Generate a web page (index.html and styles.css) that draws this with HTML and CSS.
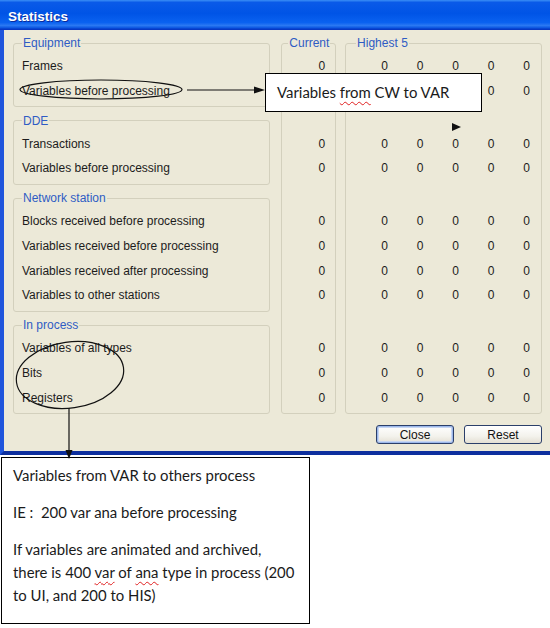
FILE: index.html
```html
<!DOCTYPE html>
<html lang="en">
<head>
    <meta charset="UTF-8">
    <title>Statistics</title>
    <link rel="stylesheet" href="styles.css">
</head>
<body>
<div class="page">

    <div class="window">
        <div class="title-bar">
            <span class="title">Statistics</span>
        </div>

        <div class="window-body">
            <div class="stats">

                <div class="groups">
                    <fieldset class="group">
                        <legend>Equipment</legend>
                        <div class="row">Frames</div>
                        <div class="row">Variables before processing</div>
                    </fieldset>
                    <fieldset class="group">
                        <legend>DDE</legend>
                        <div class="row">Transactions</div>
                        <div class="row">Variables before processing</div>
                    </fieldset>
                    <fieldset class="group">
                        <legend>Network station</legend>
                        <div class="row">Blocks received before processing</div>
                        <div class="row">Variables received before processing</div>
                        <div class="row">Variables received after processing</div>
                        <div class="row">Variables to other stations</div>
                    </fieldset>
                    <fieldset class="group">
                        <legend>In process</legend>
                        <div class="row">Variables of all types</div>
                        <div class="row">Bits</div>
                        <div class="row">Registers</div>
                    </fieldset>
                </div>

                <fieldset class="column current">
                    <legend>Current</legend>
                    <div class="block">
                        <div class="row">0</div>
                        <div class="row">0</div>
                    </div>
                    <div class="block">
                        <div class="row">0</div>
                        <div class="row">0</div>
                    </div>
                    <div class="block">
                        <div class="row">0</div>
                        <div class="row">0</div>
                        <div class="row">0</div>
                        <div class="row">0</div>
                    </div>
                    <div class="block">
                        <div class="row">0</div>
                        <div class="row">0</div>
                        <div class="row">0</div>
                    </div>
                </fieldset>

                <fieldset class="column highest">
                    <legend>Highest 5</legend>
                    <div class="block">
                        <div class="row"><span>0</span><span>0</span><span>0</span><span>0</span><span>0</span></div>
                        <div class="row"><span>0</span><span>0</span><span>0</span><span>0</span><span>0</span></div>
                    </div>
                    <div class="block">
                        <div class="row"><span>0</span><span>0</span><span>0</span><span>0</span><span>0</span></div>
                        <div class="row"><span>0</span><span>0</span><span>0</span><span>0</span><span>0</span></div>
                    </div>
                    <div class="block">
                        <div class="row"><span>0</span><span>0</span><span>0</span><span>0</span><span>0</span></div>
                        <div class="row"><span>0</span><span>0</span><span>0</span><span>0</span><span>0</span></div>
                        <div class="row"><span>0</span><span>0</span><span>0</span><span>0</span><span>0</span></div>
                        <div class="row"><span>0</span><span>0</span><span>0</span><span>0</span><span>0</span></div>
                    </div>
                    <div class="block">
                        <div class="row"><span>0</span><span>0</span><span>0</span><span>0</span><span>0</span></div>
                        <div class="row"><span>0</span><span>0</span><span>0</span><span>0</span><span>0</span></div>
                        <div class="row"><span>0</span><span>0</span><span>0</span><span>0</span><span>0</span></div>
                    </div>
                </fieldset>

            </div>

            <div class="buttons">
                <button class="btn btn-default">Close</button>
                <button class="btn">Reset</button>
            </div>
        </div>
    </div>

    <!-- note under the dialog -->
    <div class="note note-bottom">
        <p>Variables from VAR to others process</p>
        <p>IE :&nbsp; 200 var ana before processing</p>
        <p>If variables are animated and archived,<br>
           there is 400 <span class="typo">var</span> of <span class="typo">ana</span> type in process (200<br>
           to UI, and 200 to HIS)</p>
    </div>

    <!-- annotations drawn over the dialog -->
    <div class="note note-top">Variables <span class="typo">from</span> CW to VAR</div>

    <svg class="marks" width="550" height="628" viewBox="0 0 550 628">
        <ellipse cx="101" cy="89.5" rx="81" ry="9.5" fill="none" stroke="#111" stroke-width="1.2"/>
        <line x1="187" y1="90" x2="256" y2="90" stroke="#111" stroke-width="1.2"/>
        <polygon points="254,86.5 265,90 254,93.5" fill="#111"/>
        <polygon points="452,123 461,127 452,131" fill="#111"/>
        <ellipse cx="70" cy="375" rx="54" ry="33" transform="rotate(-8 70 375)" fill="none" stroke="#111" stroke-width="1.2"/>
        <line x1="69" y1="408" x2="69" y2="451" stroke="#111" stroke-width="1.2"/>
        <polygon points="65.5,450 72.5,450 69,459" fill="#111"/>
    </svg>

</div>
</body>
</html>
```

FILE: styles.css
```css
body {
    margin: 0;
    background-color: #ffffff;
    font-family: "Liberation Sans", Arial, sans-serif;
}

.page {
    position: relative;
    width: 550px;
    height: 628px;
    overflow: hidden;
}

/* window frame */
.title-bar {
    box-sizing: border-box;
    height: 30px;
    display: flex;
    align-items: center;
    padding: 3px 0 0 8px;
    background: linear-gradient(180deg, #3b8ff6, #0a5ae8 8%, #0054e6 45%, #0a62f0 75%, #2a78f2 85%, #0b55e0 93%, #0637c4 97%, #0637c4);
}

.title {
    color: #ffffff;
    font-weight: bold;
    font-size: 13.5px;
    text-shadow: 1px 1px #0b2c9c;
}

.window-body {
    background-color: #ece9d8;
    border-left: 4px solid #1f55dc;
    border-bottom: 4px solid #0d2f9e;
    padding: 6px 8px 7px 9px;
}

.stats {
    display: flex;
    align-items: stretch;
}

/* group boxes */
fieldset {
    margin: 0;
    min-width: 0;
    border: 1px solid #d3d0bd;
    border-radius: 3px;
    padding: 4px 0 3px 8px;
}

legend {
    padding: 0 1px;
    font-size: 12px;
    line-height: 14px;
    color: #2f5cc4;
}

.groups {
    width: 259px;
}

.group + .group {
    margin-top: 6.3px;
}

.row {
    height: 24.7px;
    line-height: 24.7px;
    font-size: 12px;
    color: #1c1c1c;
    white-space: nowrap;
}

.column {
    box-sizing: border-box;
}

.current {
    width: 55px;
    margin-left: 11px;
    padding: 4px 10px 3px 6px;
}

.current .row {
    text-align: right;
}

.highest {
    width: 198px;
    margin-left: 9px;
    padding: 4px 11px 3px 10px;
}

.highest .row {
    display: grid;
    grid-template-columns: repeat(5, 35.5px);
    justify-content: end;
    justify-items: end;
}

.block + .block {
    margin-top: 28.3px;
}

/* buttons */
.buttons {
    display: flex;
    justify-content: flex-end;
    gap: 10px;
    margin-top: 11px;
}

.btn {
    width: 78px;
    height: 19px;
    padding: 0;
    font-family: "Liberation Sans", Arial, sans-serif;
    font-size: 12px;
    color: #111;
    border: 1px solid #2b3f6a;
    border-radius: 3px;
    background: linear-gradient(180deg, #ffffff, #f3f2ec 60%, #e4e0d4);
}

.btn-default {
    box-shadow: inset 0 0 0 1px #9cb8ea, inset 0 0 0 2px #c7d6f2;
}

/* annotations */
.note {
    box-sizing: border-box;
    background-color: #ffffff;
    border: 1px solid #000;
    font-family: Lato, "Liberation Sans", sans-serif;
    font-size: 14.9px;
    color: #1a1a1a;
}

.note-top {
    position: absolute;
    left: 265px;
    top: 73px;
    width: 217px;
    height: 39px;
    padding-left: 11px;
    line-height: 37px;
}

.note-bottom {
    width: 309px;
    height: 167px;
    margin: 2px 0 0 1px;
    padding: 5.5px 8px 0 11px;
    line-height: 23px;
    white-space: nowrap;
}

.note-bottom p {
    margin: 0 0 14px;
}

.typo {
    text-decoration: underline wavy #e02020;
    text-decoration-thickness: 1px;
    text-underline-offset: 3px;
    text-decoration-skip-ink: none;
}

.marks {
    position: absolute;
    left: 0;
    top: 0;
    pointer-events: none;
}
```
